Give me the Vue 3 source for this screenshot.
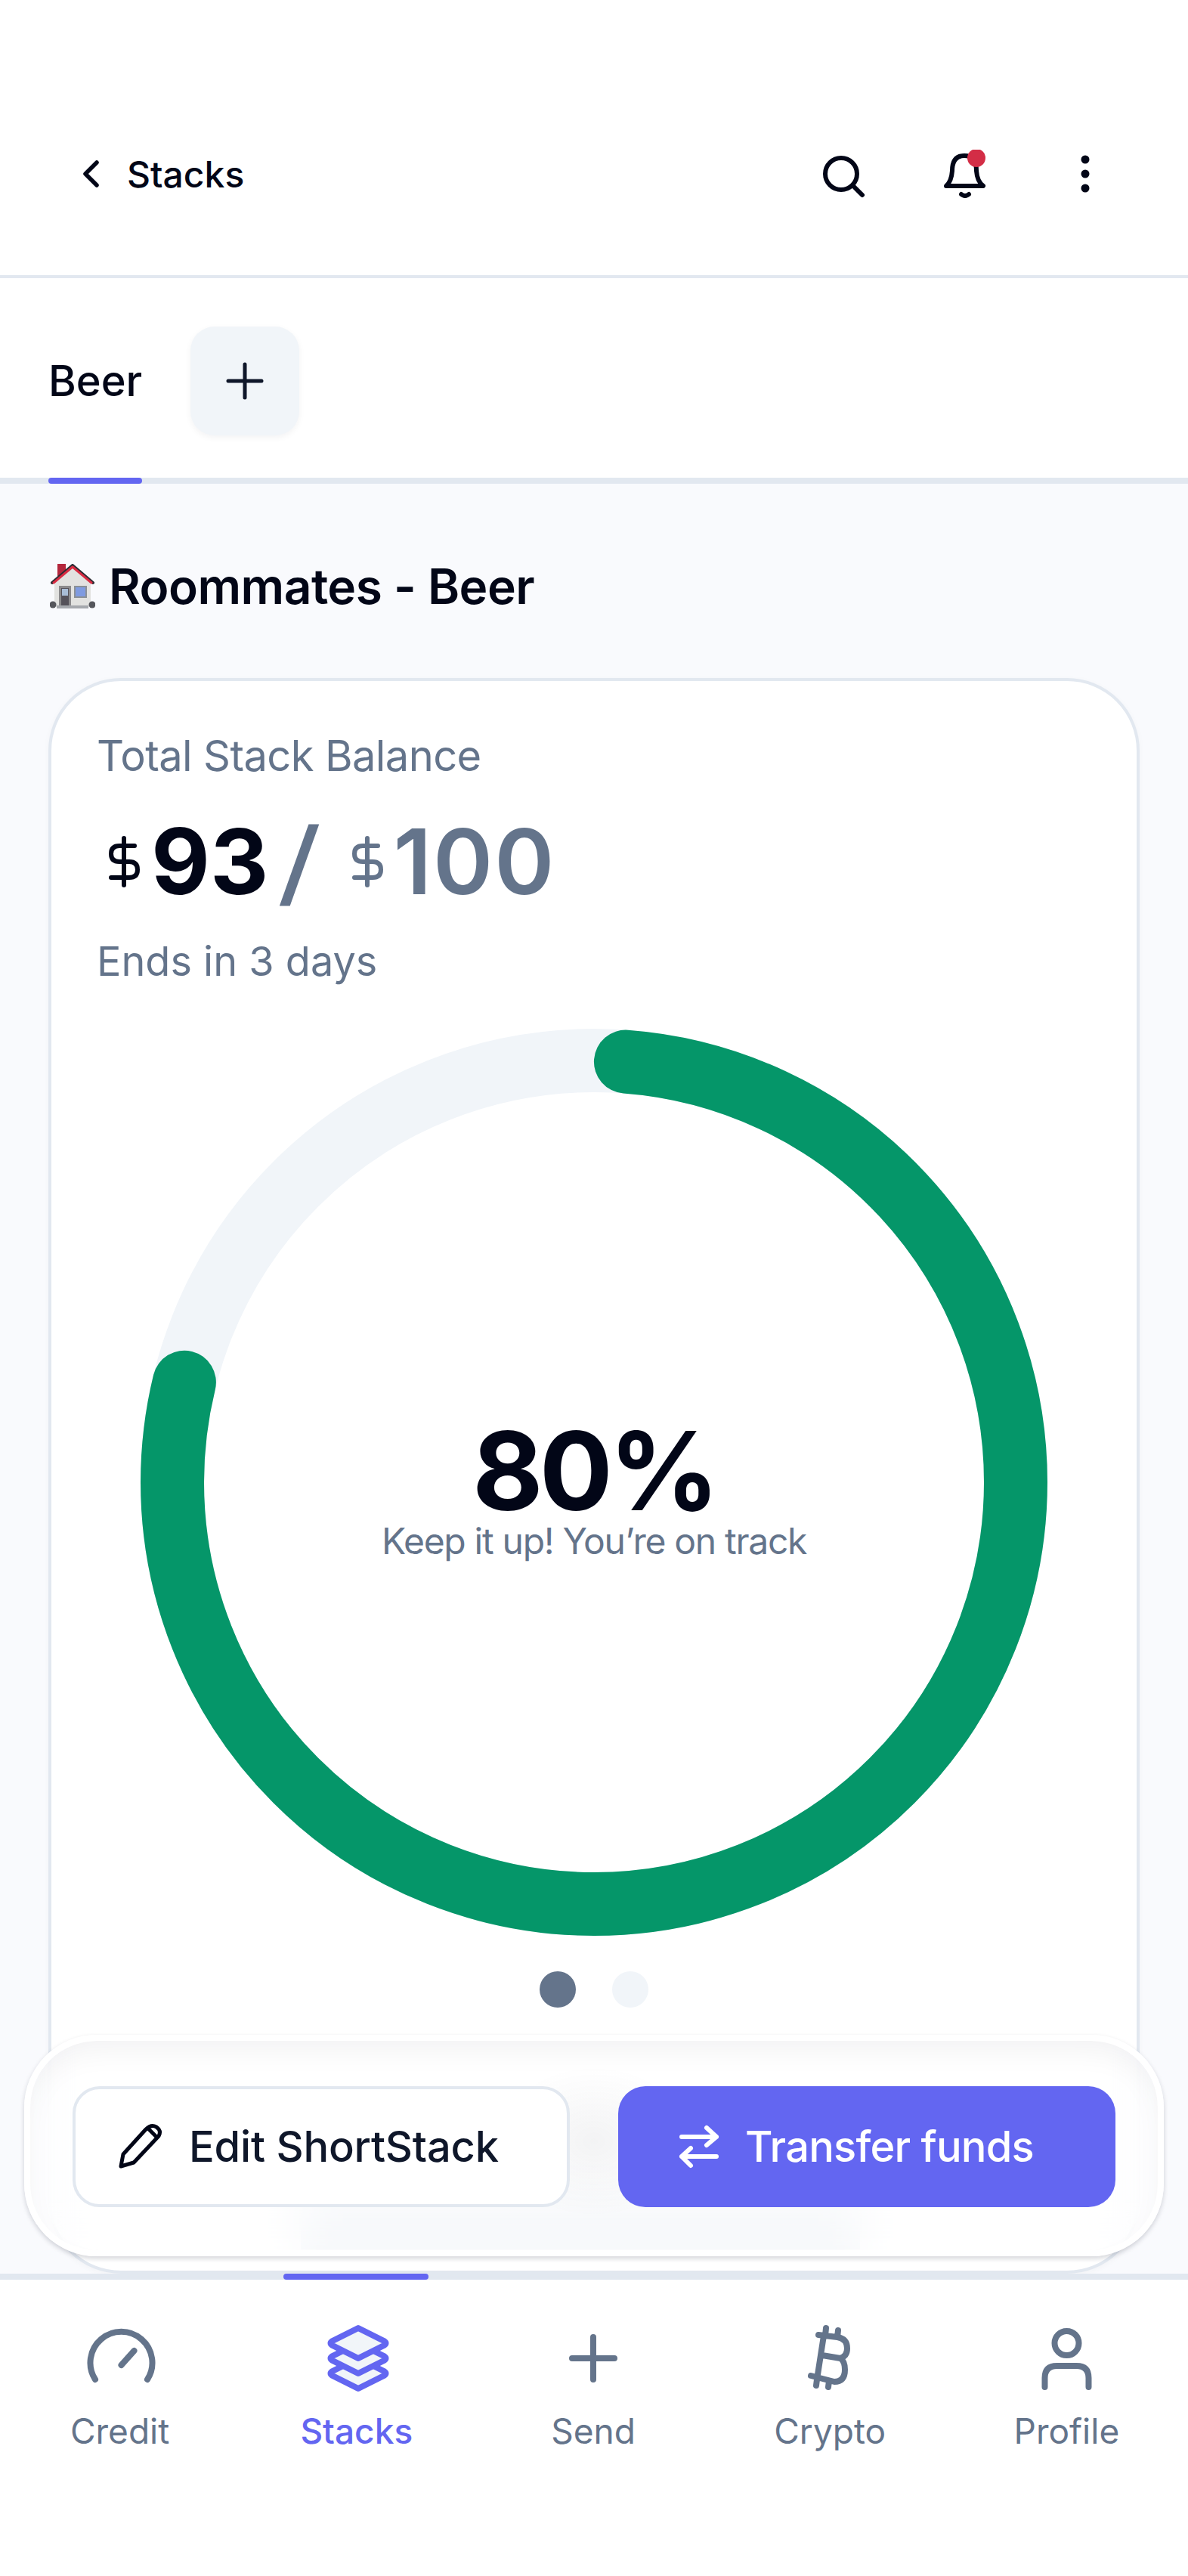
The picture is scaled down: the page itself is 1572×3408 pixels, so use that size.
<template>
  <div class="page">
    <header class="top-bar">
      <div class="back">
        <svg class="back-icon" viewBox="0 0 48 48"><path d="M32 9 17 24l15 15" /></svg>
        <span>Stacks</span>
      </div>
      <div class="top-actions">
        <svg class="icon" viewBox="0 0 64 64"><circle cx="29" cy="32" r="21" /><path d="m45 48 12 12" /></svg>
        <svg class="icon" viewBox="0 0 64 64">
          <path d="M8 48q7-6 8-20C16 14 22 8 32 8s16 6 16 20q1 14 9 20z" />
          <path d="M28 59q5 4 10 0" />
          <circle class="badge" cx="48" cy="11" r="12" />
        </svg>
        <svg class="icon" viewBox="0 0 64 64">
          <circle class="solid" cx="32" cy="13" r="5.5" />
          <circle class="solid" cx="32" cy="32" r="5.5" />
          <circle class="solid" cx="32" cy="51" r="5.5" />
        </svg>
      </div>
    </header>

    <nav class="tabs">
      <div class="tab">Beer</div>
      <button class="add-tab">
        <svg viewBox="0 0 64 64"><path d="M32 10v44M10 32h44" /></svg>
      </button>
    </nav>

    <main class="content">
      <h1 class="title">
        <svg class="house" viewBox="0 0 60 60">
          <rect x="10" y="0" width="11" height="16" fill="#b3263c" />
          <path d="M6 24 30 3l24 21v33H6z" fill="#e2e2e0" />
          <path d="M3 25 30 2l27 23" fill="none" stroke="#2b2b33" stroke-width="4" />
          <path d="M5 25 30 4l25 21" fill="none" stroke="#d92b42" stroke-width="3" />
          <rect x="12" y="29" width="16" height="26" fill="#8b8a8c" />
          <rect x="15" y="32" width="10" height="23" fill="#55525a" />
          <rect x="16" y="33" width="8" height="9" fill="#a9bdd6" />
          <rect x="32" y="29" width="17" height="16" fill="#8a9096" />
          <rect x="34" y="31" width="13" height="12" fill="#7f9be0" />
          <circle cx="4" cy="54" r="4.5" fill="#55565c" />
          <circle cx="56" cy="54" r="4.5" fill="#55565c" />
          <rect x="9" y="55" width="42" height="4" fill="#a5a8ad" />
        </svg>
        <span>Roommates - Beer</span>
      </h1>

      <section class="card">
        <div class="label">Total Stack Balance</div>
        <div class="amount">
          <svg class="dollar" viewBox="0 0 48 72"><path :d="dollarPath" /></svg>
          <span class="saved">93</span>
          <span class="slash">/</span>
          <svg class="dollar goal" viewBox="0 0 48 72"><path :d="dollarPath" /></svg>
          <span class="target">100</span>
        </div>
        <div class="label ends">Ends in 3 days</div>

        <div class="ring">
          <svg viewBox="0 0 1200 1200">
            <circle class="ring-track" cx="600" cy="600" :r="radius" />
            <circle
              class="ring-value"
              cx="600"
              cy="600"
              :r="radius"
              :stroke-dasharray="dash"
              :stroke-dashoffset="-capSize"
              transform="rotate(-90 600 600)"
            />
          </svg>
          <div class="ring-text">
            <div class="percent">{{ percent }}%</div>
            <div class="hint">Keep it up! You’re on track</div>
          </div>
        </div>

        <div class="dots">
          <span class="dot active"></span>
          <span class="dot"></span>
        </div>
        <div class="peek"></div>
      </section>

      <div class="actions">
        <button class="btn btn-light">
          <svg viewBox="0 0 64 64">
            <path d="M6 58 9 42 39 9q7-7 14-3 7 5 3 12L23 53z" />
            <path d="m42 8 11 11" />
          </svg>
          Edit ShortStack
        </button>
        <button class="btn btn-primary">
          <svg viewBox="0 0 64 64">
            <path d="M11 19h46M44 7l13 12-13 11" />
            <path d="M57 45H11M23 34 11 45l12 12" />
          </svg>
          Transfer funds
        </button>
      </div>
    </main>

    <footer class="bottom-nav">
      <div v-for="item in navItems" :key="item.name" class="nav-item" :class="{ active: item.active }">
        <svg viewBox="0 0 96 96">
          <path v-for="d in item.paths" :key="d" :d="d" />
          <circle v-if="item.head" cx="48.5" cy="29" r="16" />
        </svg>
        <span>{{ item.name }}</span>
      </div>
    </footer>
  </div>
</template>

<script setup>
import { computed } from "vue";

const percent = 80;
const radius = 558;
const capSize = 42; // half of the stroke, the round caps stay inside the 80%

const dash = computed(() => {
  const full = 2 * Math.PI * radius;
  return `${full * (percent / 100) - capSize * 2} ${full}`;
});

const dollarPath =
  "M38 15H18Q7 15 7 25.5T18 36h13q11 0 11 10.500T31 57H7M24 5v62";

const diamond = (y) =>
  `M50 ${y - 20}l34 17q5 3 0 6L50 ${y + 20}l-34-17q-5-3 0-6z`;

const navItems = [
  { name: "Credit", paths: ["M15 77A41 41 0 1 1 84 77", "M49.500 58l17-19"] },
  { name: "Stacks", active: true, paths: [diamond(69), diamond(49), diamond(29)] },
  { name: "Send", paths: ["M48 21v56M20 49h56"] },
  {
    name: "Crypto",
    paths: [
      "M33 18l25 3q13 2 13 15 0 10-9 13l-24-4M62 49q6 4 6 15 0 16-14 16L23 72M40 19l-9 58M43 9l-1 10M59 12l-1 9M31 77l-1 8M47 79l-1 8",
    ],
  },
  { name: "Profile", head: true, paths: ["M19.500 87V75q0-16 16-16h26q16 0 16 16v12"] },
];
</script>

<style>
html,
body {
  background: #fff;
}
</style>

<style scoped>
.page {
  width: 1572px;
  height: 3408px;
  display: flex;
  flex-direction: column;
  font-family: Inter, "Liberation Sans", sans-serif;
  color: #020617;
  background: #fff;
}

svg {
  fill: none;
  stroke: currentColor;
  stroke-linecap: round;
  stroke-linejoin: round;
  flex: none;
}

.top-bar {
  box-sizing: border-box;
  height: 368px;
  padding: 100px 104px 4px 96px;
  display: flex;
  align-items: center;
  justify-content: space-between;
  border-bottom: 4px solid #e2e8f0;
}

.back {
  display: flex;
  align-items: center;
  gap: 24px;
  font-size: 48px;
  font-weight: 500;
}

.back-icon {
  width: 48px;
  height: 48px;
  stroke-width: 5.500;
}

.top-actions {
  display: flex;
  gap: 96px;
}

.icon {
  width: 64px;
  height: 64px;
  stroke-width: 6;
}

.icon .badge {
  fill: #d32d46;
  stroke: none;
}

.icon .solid {
  fill: currentColor;
  stroke: none;
}

.tabs {
  box-sizing: border-box;
  height: 272px;
  padding: 8px 64px 0;
  display: flex;
  align-items: center;
  gap: 64px;
  border-bottom: 8px solid #e2e8f0;
}

.tab {
  position: relative;
  font-size: 56px;
  font-weight: 500;
  line-height: 64px;
  width: 124px;
  text-align: center;
}

.tab::after {
  content: "";
  position: absolute;
  left: 0;
  right: 0;
  bottom: -104px;
  height: 8px;
  border-radius: 4px;
  background: #6366f1;
}

.add-tab {
  width: 144px;
  height: 144px;
  padding: 0;
  border: 0;
  border-radius: 32px;
  background: #f1f5f9;
  color: #0f172a;
  box-shadow: 0 3px 8px rgba(15, 23, 42, 0.05);
  display: flex;
  align-items: center;
  justify-content: center;
}

.add-tab svg {
  width: 64px;
  height: 64px;
  stroke-width: 5;
}

.content {
  position: relative;
  flex: 1;
  min-height: 0;
  overflow: hidden;
  padding: 100px 64px 0;
  background: #f9fafd;
}

.title {
  margin: 0;
  display: flex;
  align-items: center;
  gap: 18px;
  padding-left: 2px;
  font-size: 64px;
  line-height: 72px;
  font-weight: 600;
  letter-spacing: -0.5px;
}

.house {
  width: 60px;
  height: 60px;
  stroke: none;
}

.card {
  box-sizing: border-box;
  position: relative;
  margin-top: 85px;
  height: 2111px;
  padding: 63px 60px 0;
  border: 4px solid #e2e8f0;
  border-radius: 96px;
  background: #fff;
  box-shadow: 0 2px 8px rgba(15, 23, 42, 0.03);
}

.label {
  font-size: 56px;
  line-height: 72px;
  letter-spacing: -0.6px;
  color: #64748b;
}

.amount {
  display: flex;
  align-items: center;
  height: 120px;
  margin-top: 44px;
  padding-left: 12px;
  font-size: 120px;
  line-height: 120px;
  font-weight: 700;
}

.dollar {
  width: 48px;
  height: 72px;
  stroke-width: 6;
}

.saved {
  margin-left: 12px;
}

.slash {
  margin-left: 18px;
  font-size: 124px;
  font-weight: 600;
  color: #64748b;
  transform: skewX(-5deg);
}

.goal {
  margin-left: 42px;
  color: #64748b;
}

.target {
  margin-left: 10px;
  color: #64748b;
  font-weight: 600;
  letter-spacing: 2px;
}

.ends {
  margin-top: 36px;
  font-size: 54px;
  letter-spacing: 0;
}

.ring {
  display: grid;
  justify-content: center;
  margin-top: 53px;
}

.ring svg,
.ring-text {
  grid-area: 1 / 1;
}

.ring svg {
  width: 1200px;
  height: 1200px;
}

.ring-track,
.ring-value {
  stroke-width: 84;
}

.ring-track {
  stroke: #f1f5f9;
}

.ring-value {
  stroke: #059669;
}

.ring-text {
  place-self: center;
  padding-top: 30px;
  text-align: center;
}

.percent {
  font-size: 144px;
  line-height: 126px;
  font-weight: 700;
  letter-spacing: -5px;
}

.hint {
  font-size: 48px;
  line-height: 60px;
  letter-spacing: -1.3px;
  color: #64748b;
}

.dots {
  display: flex;
  justify-content: center;
  gap: 48px;
  margin-top: 47px;
}

.dot {
  width: 48px;
  height: 48px;
  border-radius: 50%;
  background: #f1f5f9;
}

.dot.active {
  background: #64748b;
}

/* something under the glass bar, only seen blurred */
.peek {
  width: 740px;
  height: 70px;
  margin: 250px 0 0 270px;
  background: #e8edf3;
}

.actions {
  position: absolute;
  left: 32px;
  right: 32px;
  bottom: 23px;
  box-sizing: border-box;
  display: grid;
  grid-template-columns: 1fr 1fr;
  gap: 64px;
  padding: 60px 56px 57px;
  border: 8px solid rgba(255, 255, 255, 0.9);
  border-radius: 96px;
  background: radial-gradient(ellipse 130px 100px at 50% 48%, rgba(15, 23, 42, 0.05), transparent), rgba(255, 255, 255, 0.6);
  backdrop-filter: blur(30px);
  box-shadow: inset 0 20px 40px -10px rgba(15, 23, 42, 0.06), 0 3px 6px rgba(15, 23, 42, 0.18);
}

.btn {
  box-sizing: border-box;
  height: 160px;
  padding: 0;
  display: flex;
  align-items: center;
  gap: 32px;
  border-radius: 36px;
  font-family: inherit;
  font-size: 56px;
  font-weight: 500;
}

.btn svg {
  width: 64px;
  height: 64px;
}

.btn-light {
  padding-left: 54px;
  border: 4px solid #e2e8f0;
  background: #fff;
  color: #0f172a;
  letter-spacing: -0.2px;
}

.btn-light svg {
  color: #020617;
  stroke-width: 5;
}

.btn-primary {
  padding-left: 73px;
  gap: 31px;
  border: 0;
  background: #6366f1;
  color: #fff;
  letter-spacing: -0.8px;
}

.btn-primary svg {
  stroke-width: 6;
}

.bottom-nav {
  position: relative;
  box-sizing: border-box;
  height: 400px;
  padding: 55px 4px 0 2px;
  display: grid;
  grid-template-columns: repeat(5, 1fr);
  align-content: start;
  border-top: 8px solid #e2e8f0;
  background: #fff;
}

.nav-item {
  position: relative;
  display: flex;
  flex-direction: column;
  align-items: center;
  gap: 21px;
  font-size: 46px;
  line-height: 56px;
  color: #64748b;
}

.nav-item svg {
  width: 96px;
  height: 96px;
  stroke-width: 8;
}

.nav-item.active {
  color: #6366f1;
  font-weight: 500;
}

.nav-item.active svg path {
  fill: #f1f5f9;
}

.nav-item.active::before {
  content: "";
  position: absolute;
  top: -63px;
  left: 60px;
  width: 192px;
  height: 8px;
  border-radius: 4px;
  background: #6366f1;
}
</style>
